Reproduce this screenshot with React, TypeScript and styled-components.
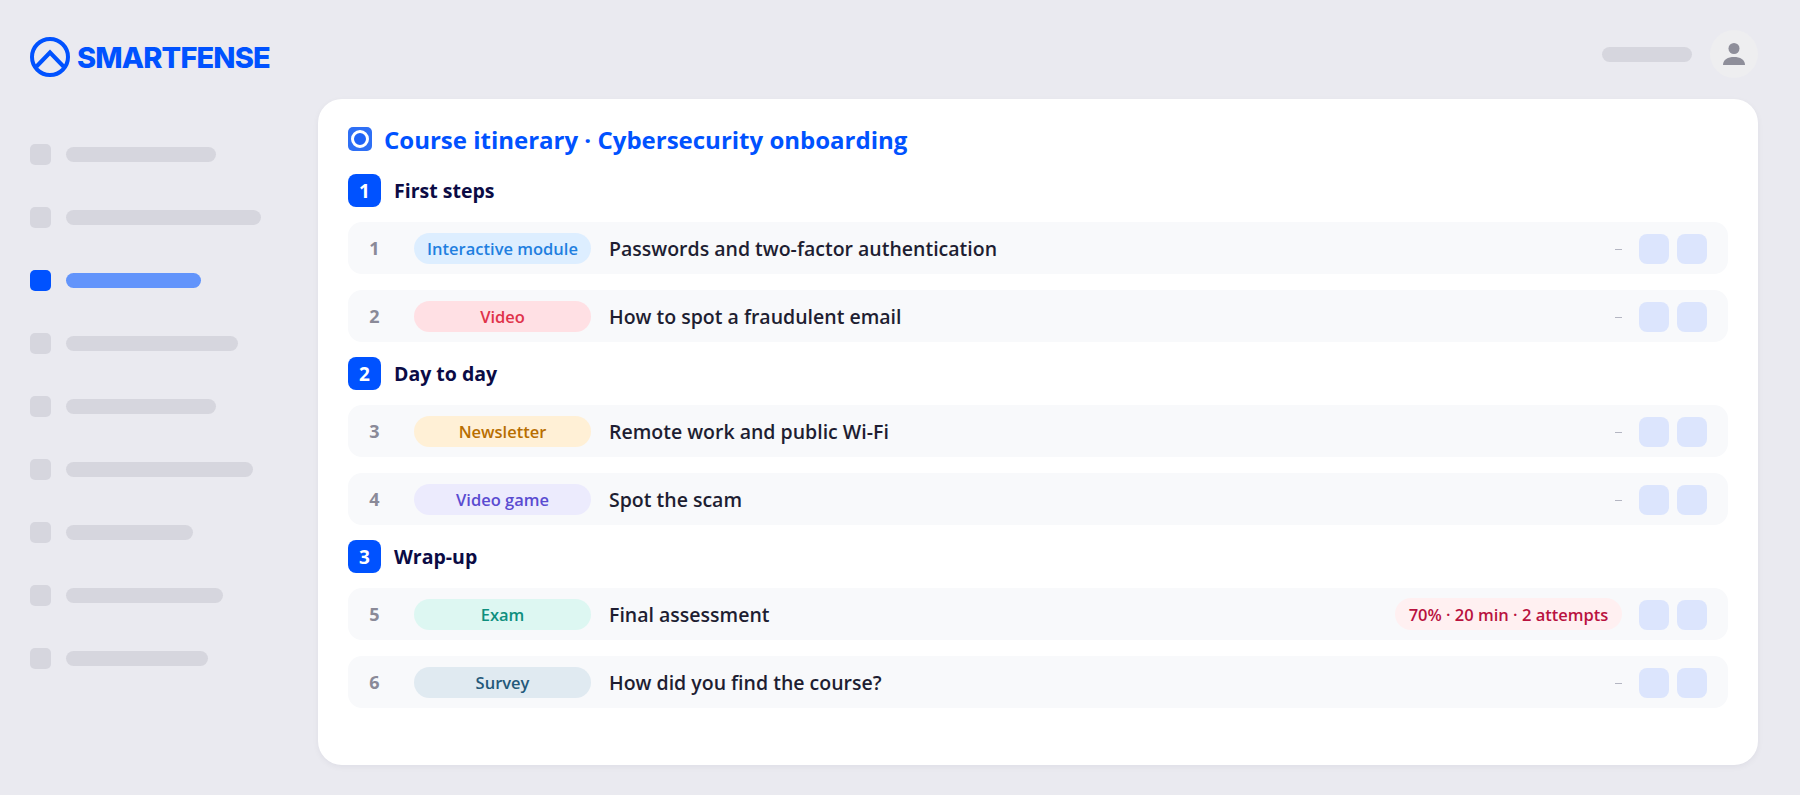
import styled, { createGlobalStyle } from "styled-components";

const GlobalStyle = createGlobalStyle`
  * { box-sizing: border-box; }
  body {
    margin: 0;
    background: #eaeaf0;
    font-family: "Open Sans", "Noto Sans", sans-serif;
  }
`;

const Page = styled.div`
  height: 795px;
  padding: 0 42px 30px 30px;
  display: flex;
  flex-direction: column;
  overflow: hidden;
`;

const Header = styled.header`
  height: 99px;
  flex-shrink: 0;
  padding-top: 30px;
  display: flex;
  justify-content: space-between;
  align-items: flex-start;
`;

const Logo = styled.div`
  height: 40px;
  margin-top: 7px;
  display: flex;
  align-items: center;
  gap: 7px;
  color: #0052ff;
`;

const LogoText = styled.span`
  font-family: "Inter", sans-serif;
  font-weight: 800;
  font-size: 29px;
  line-height: 1;
  letter-spacing: -0.85px;
`;

const UserArea = styled.div`
  display: flex;
  align-items: center;
  gap: 18px;
`;

const UserName = styled.div`
  width: 90px;
  height: 15px;
  border-radius: 8px;
  background: #d6d6de;
`;

const Avatar = styled.div`
  width: 48px;
  height: 48px;
  border-radius: 50%;
  background: #eeeef0;
  display: flex;
  align-items: center;
  justify-content: center;
`;

const Body = styled.div`
  flex: 1;
  display: flex;
  min-height: 0;
`;

const Sidebar = styled.nav`
  width: 288px;
  flex-shrink: 0;
  padding-top: 45px;
  display: flex;
  flex-direction: column;
  gap: 42px;
`;

const NavItem = styled.div`
  height: 21px;
  display: flex;
  align-items: center;
  gap: 15px;
`;

const NavIcon = styled.div<{ $active?: boolean }>`
  width: 21px;
  height: 21px;
  border-radius: 5px;
  background: ${(p) => (p.$active ? "#0052ff" : "#d6d6de")};
`;

const NavBar = styled.div<{ $width: number; $active?: boolean }>`
  width: ${(p) => p.$width}px;
  height: 15px;
  border-radius: 8px;
  background: ${(p) => (p.$active ? "#6294fb" : "#d6d6de")};
`;

const Card = styled.main`
  flex: 1;
  background: #fff;
  border-radius: 24px;
  box-shadow: 0 2px 6px rgba(20, 20, 60, 0.05);
  padding: 28px 30px 0;
`;

const Title = styled.h1`
  margin: 0 0 23px;
  height: 24px;
  display: flex;
  align-items: center;
  gap: 12px;
  font-size: 24px;
  font-weight: 700;
  color: #0052ff;
  white-space: nowrap;
`;

const TitleIcon = styled.span`
  width: 24px;
  height: 24px;
  border-radius: 5px;
  background: #2e6ff5;
  display: flex;
  align-items: center;
  justify-content: center;
`;

const TitleDot = styled.span`
  width: 18px;
  height: 18px;
  border-radius: 50%;
  border: 3px solid #fff;
  background: #1f63f7;
`;

const Section = styled.section`
  display: flex;
  flex-direction: column;
  gap: 16px;
  margin-bottom: 15px;
`;

const SectionHead = styled.div`
  height: 33px;
  margin-bottom: -1px;
  display: flex;
  align-items: center;
  gap: 13px;
`;

const SectionBadge = styled.span`
  width: 33px;
  height: 33px;
  border-radius: 8px;
  background: #0052ff;
  color: #fff;
  font-size: 19px;
  font-weight: 700;
  display: flex;
  align-items: center;
  justify-content: center;
`;

const SectionName = styled.span`
  font-size: 19.5px;
  font-weight: 700;
  color: #0b0b45;
`;

const Row = styled.div`
  height: 52px;
  border-radius: 14px;
  background: #f8f9fb;
  padding: 0 21px 0 0;
  display: flex;
  align-items: center;
`;

const RowNumber = styled.span`
  width: 66px;
  padding-right: 13px;
  text-align: center;
  font-size: 18px;
  font-weight: 700;
  color: #8a8a98;
`;

const TypePill = styled.span<{ $bg: string; $fg: string }>`
  width: 177px;
  height: 31px;
  border-radius: 16px;
  background: ${(p) => p.$bg};
  color: ${(p) => p.$fg};
  font-size: 16.5px;
  font-weight: 600;
  display: flex;
  align-items: center;
  justify-content: center;
  white-space: nowrap;
`;

const RowTitle = styled.span`
  margin-left: 18px;
  flex: 1;
  font-size: 19.5px;
  font-weight: 600;
  color: #1e1e32;
`;

const Dash = styled.span`
  width: 7px;
  height: 1.5px;
  margin: 3px 17px 0 0;
  background: #b4b6c2;
`;

const Requirement = styled.span`
  height: 32px;
  width: 227px;
  margin-right: 17px;
  border-radius: 16px;
  background: #fff0f1;
  color: #b9123f;
  font-size: 16.5px;
  font-weight: 600;
  display: flex;
  align-items: center;
  justify-content: center;
  white-space: nowrap;
`;

const Actions = styled.div`
  display: flex;
  gap: 8px;
  margin-top: 2px;
`;

const ActionButton = styled.span`
  width: 30px;
  height: 30px;
  border-radius: 8px;
  background: #dce5fd;
`;

const navBars = [150, 195, 135, 172, 150, 187, 127, 157, 142];

interface Lesson {
  n: number;
  type: string;
  bg: string;
  fg: string;
  title: string;
  req?: string;
}

const sections: { n: number; name: string; lessons: Lesson[] }[] = [
  {
    n: 1,
    name: "First steps",
    lessons: [
      { n: 1, type: "Interactive module", bg: "#ddeeff", fg: "#1f7fe0", title: "Passwords and two-factor authentication" },
      { n: 2, type: "Video", bg: "#ffe0e4", fg: "#e0324a", title: "How to spot a fraudulent email" },
    ],
  },
  {
    n: 2,
    name: "Day to day",
    lessons: [
      { n: 3, type: "Newsletter", bg: "#fff0d6", fg: "#b86e00", title: "Remote work and public Wi-Fi" },
      { n: 4, type: "Video game", bg: "#ecebfd", fg: "#5a4bd1", title: "Spot the scam" },
    ],
  },
  {
    n: 3,
    name: "Wrap-up",
    lessons: [
      { n: 5, type: "Exam", bg: "#ddf7f2", fg: "#0e8f7e", title: "Final assessment", req: "70% · 20 min · 2 attempts" },
      { n: 6, type: "Survey", bg: "#e0eaf1", fg: "#24597a", title: "How did you find the course?" },
    ],
  },
];

export default function App() {
  return (
    <Page>
      <GlobalStyle />
      <Header>
        <Logo>
          <svg width="40" height="40" viewBox="0 0 40 40" fill="none">
            <circle cx="20" cy="20" r="18" stroke="#0052ff" strokeWidth="4" />
            <path d="M6.5 29.5 L20 15.5 L33.5 29.5" stroke="#0052ff" strokeWidth="4" />
          </svg>
          <LogoText>SMARTFENSE</LogoText>
        </Logo>
        <UserArea>
          <UserName />
          <Avatar>
            <svg width="24" height="24" viewBox="0 0 24 24" fill="#8e8e9a">
              <circle cx="12" cy="6.5" r="5.5" />
              <path d="M1 23 C1 17.5 6 15 12 15 C18 15 23 17.5 23 23 Z" />
            </svg>
          </Avatar>
        </UserArea>
      </Header>
      <Body>
        <Sidebar>
          {navBars.map((w, i) => (
            <NavItem key={i}>
              <NavIcon $active={i === 2} />
              <NavBar $width={w} $active={i === 2} />
            </NavItem>
          ))}
        </Sidebar>
        <Card>
          <Title>
            <TitleIcon>
              <TitleDot />
            </TitleIcon>
            Course itinerary · Cybersecurity onboarding
          </Title>
          {sections.map((s) => (
            <Section key={s.n}>
              <SectionHead>
                <SectionBadge>{s.n}</SectionBadge>
                <SectionName>{s.name}</SectionName>
              </SectionHead>
              {s.lessons.map((l) => (
                <Row key={l.n}>
                  <RowNumber>{l.n}</RowNumber>
                  <TypePill $bg={l.bg} $fg={l.fg}>{l.type}</TypePill>
                  <RowTitle>{l.title}</RowTitle>
                  {l.req ? <Requirement>{l.req}</Requirement> : <Dash />}
                  <Actions>
                    <ActionButton />
                    <ActionButton />
                  </Actions>
                </Row>
              ))}
            </Section>
          ))}
        </Card>
      </Body>
    </Page>
  );
}
